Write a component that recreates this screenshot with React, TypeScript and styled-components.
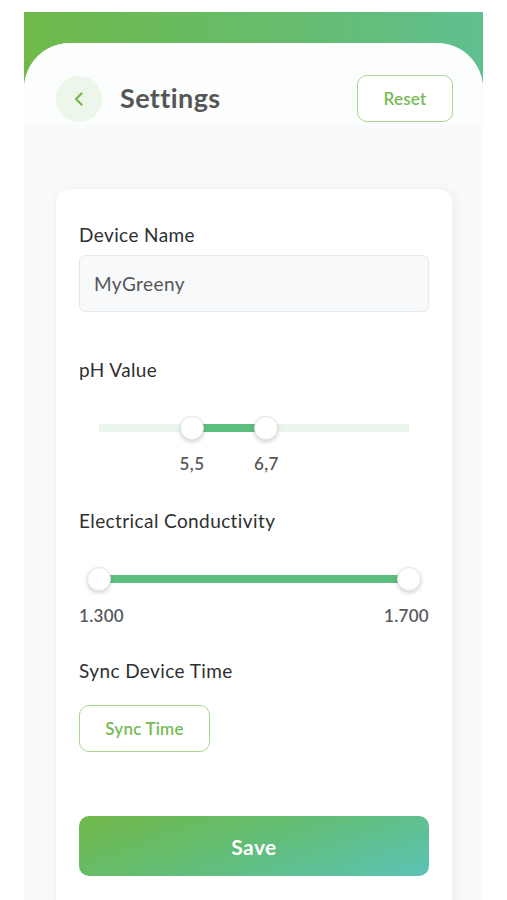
import React from "react";
import styled, { createGlobalStyle } from "styled-components";

const Global = createGlobalStyle`
  html, body { margin: 0; padding: 0; background: #ffffff; }
  body { font-family: Lato, "Noto Sans", sans-serif; -webkit-font-smoothing: antialiased; }
  * { box-sizing: border-box; }
`;

const Page = styled.div`
  width: 507px;
  height: 900px;
  overflow: hidden;
  padding: 12px 24px 0 24px;
`;

const Screen = styled.div`
  width: 459px;
  height: 888px;
  background: linear-gradient(90deg, #70ba4a 0%, #66bc6c 55%, #5fbf8f 100%);
  display: flex;
  flex-direction: column;
`;

const Panel = styled.div`
  margin-top: 31px;
  flex: 1;
  background: #f9fafb;
  border-radius: 46px 46px 0 0;
  display: flex;
  flex-direction: column;
  overflow: hidden;
`;

const TopBar = styled.div`
  display: flex;
  align-items: center;
  padding: 32px 30px 3px 32px;
  background: #fcfdfd;
`;

const BackButton = styled.button`
  width: 46px;
  height: 46px;
  border-radius: 50%;
  border: none;
  background: #edf6ea;
  display: flex;
  align-items: center;
  justify-content: center;
  padding: 0;
`;

const Title = styled.h1`
  margin: -2px 0 0 18px;
  flex: 1;
  font-size: 27px;
  font-weight: 700;
  color: #555657;
  letter-spacing: 0.4px;
`;

const OutlineButton = styled.button<{ $w: number; $h: number }>`
  width: ${(p) => p.$w}px;
  height: ${(p) => p.$h}px;
  border: 1.5px solid #a6d690;
  border-radius: 10px;
  background: #ffffff;
  color: #77ba55;
  font-family: Lato, "Noto Sans", sans-serif;
  font-size: 17px;
  font-weight: 600;
  letter-spacing: 0.2px;
  padding: 0;
`;

const Content = styled.div`
  flex: 1;
  padding: 63px 30px 0 31px;
`;

const Card = styled.div`
  background: #ffffff;
  border-radius: 14px;
  border: 1px solid #eff1f2;
  box-shadow: 3px 2px 14px rgba(0, 0, 0, 0.05);
  padding: 34px 23px 40px 23px;
  display: flex;
  flex-direction: column;
  min-height: 740px;
`;

const Label = styled.div<{ $mt?: number }>`
  margin-top: ${(p) => p.$mt ?? 0}px;
  font-size: 19px;
  line-height: 24px;
  color: #2e2f30;
  font-weight: 400;
  letter-spacing: 0.4px;
`;

const Input = styled.div`
  margin-top: 8px;
  height: 57px;
  background: #f7f9fb;
  border: 1px solid #e7eaed;
  border-radius: 6px;
  display: flex;
  align-items: center;
  padding-left: 14px;
  font-size: 19px;
  letter-spacing: 0.4px;
  color: #555657;
`;

const SliderBox = styled.div<{ $mt: number }>`
  margin-top: ${(p) => p.$mt}px;
  position: relative;
  height: 24px;
  margin-left: 20px;
  margin-right: 20px;
`;

const Track = styled.div`
  position: absolute;
  left: 0;
  right: 0;
  top: 8px;
  height: 8px;
  background: #eaf6ed;
`;

const Active = styled.div`
  position: absolute;
  top: 8px;
  height: 8px;
  background: #5dbf7d;
`;

const Thumb = styled.div`
  position: absolute;
  top: 0;
  width: 24px;
  height: 24px;
  margin-left: -12px;
  border-radius: 50%;
  background: #ffffff;
  border: 1px solid #e4e6e8;
  box-shadow: 0 2px 4px rgba(0, 0, 0, 0.18);
`;

const ThumbLabels = styled.div`
  position: relative;
  height: 20px;
  margin: 14px 20px 0 20px;
`;

const ThumbLabel = styled.span`
  position: absolute;
  top: 0;
  transform: translateX(-50%);
  font-size: 17px;
  line-height: 20px;
  font-weight: 600;
  letter-spacing: 0.4px;
  color: #58595a;
`;

const EndLabels = styled.div`
  display: flex;
  justify-content: space-between;
  margin-top: 15px;
  font-size: 17px;
  line-height: 20px;
  font-weight: 600;
  letter-spacing: 0.3px;
  color: #58595a;
`;

const SyncRow = styled.div`
  margin-top: 22px;
  display: flex;
`;

const SaveButton = styled.button`
  margin-top: 64px;
  height: 60px;
  border: none;
  border-radius: 10px;
  background: linear-gradient(160deg, #73b94a 0%, #62bd72 45%, #5cc3b6 100%);
  color: #ffffff;
  font-family: Lato, "Noto Sans", sans-serif;
  font-size: 21px;
  font-weight: 700;
  letter-spacing: 0.4px;
`;

const TRACK_W = 310;

function RangeSlider({ min, max, lo, hi, mt }: { min: number; max: number; lo: number; hi: number; mt: number }) {
  const a = ((lo - min) / (max - min)) * TRACK_W;
  const b = ((hi - min) / (max - min)) * TRACK_W;
  return (
    <SliderBox $mt={mt}>
      <Track />
      <Active style={{ left: a, width: b - a }} />
      <Thumb style={{ left: a }} />
      <Thumb style={{ left: b }} />
    </SliderBox>
  );
}

export default function App() {
  const phMin = 4;
  const phMax = 9;
  const pos = (v: number) => ((v - phMin) / (phMax - phMin)) * TRACK_W;
  return (
    <>
      <Global />
      <Page>
        <Screen>
          <Panel>
            <TopBar>
              <BackButton aria-label="Back">
                <svg width="14" height="16" viewBox="0 0 14 16">
                  <path d="M9.5 2.5 L4 8 L9.5 13.5" fill="none" stroke="#6fb84c" strokeWidth="2.2" strokeLinecap="round" strokeLinejoin="round" />
                </svg>
              </BackButton>
              <Title>Settings</Title>
              <OutlineButton $w={96} $h={47}>Reset</OutlineButton>
            </TopBar>
            <Content>
              <Card>
                <Label>Device Name</Label>
                <Input>MyGreeny</Input>
                <Label $mt={46}>pH Value</Label>
                <RangeSlider min={phMin} max={phMax} lo={5.5} hi={6.7} mt={34} />
                <ThumbLabels>
                  <ThumbLabel style={{ left: pos(5.5) }}>5,5</ThumbLabel>
                  <ThumbLabel style={{ left: pos(6.7) }}>6,7</ThumbLabel>
                </ThumbLabels>
                <Label $mt={35}>Electrical Conductivity</Label>
                <RangeSlider min={1.3} max={1.7} lo={1.3} hi={1.7} mt={34} />
                <EndLabels>
                  <span>1.300</span>
                  <span>1.700</span>
                </EndLabels>
                <Label $mt={33}>Sync Device Time</Label>
                <SyncRow>
                  <OutlineButton $w={131} $h={47}>Sync Time</OutlineButton>
                </SyncRow>
                <SaveButton>Save</SaveButton>
              </Card>
            </Content>
          </Panel>
        </Screen>
      </Page>
    </>
  );
}
